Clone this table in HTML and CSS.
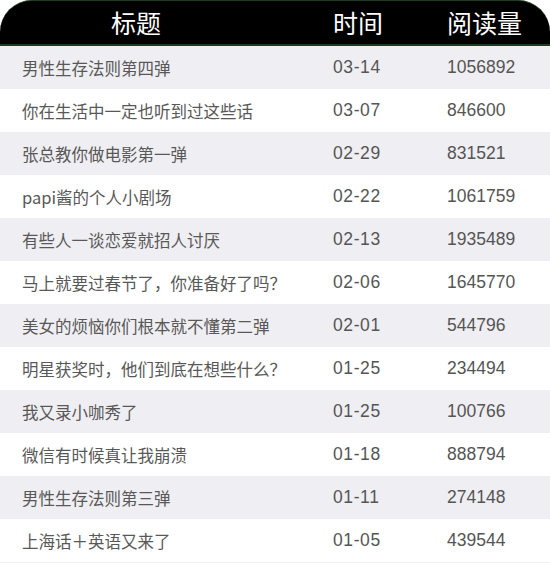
FILE: index.html
```html
<!DOCTYPE html>
<html lang="zh">
<head>
<meta charset="utf-8">
<title>阅读量</title>
<link rel="stylesheet" href="styles.css">
</head>
<body>
<div class="table">
  <div class="head">
    <div class="h-title">标题</div>
    <div class="h-time">时间</div>
    <div class="h-views">阅读量</div>
  </div>
  <div class="row alt"><div class="c-title">男性生存法则第四弹</div><div class="c-time">03-14</div><div class="c-views">1056892</div></div>
  <div class="row"><div class="c-title">你在生活中一定也听到过这些话</div><div class="c-time">03-07</div><div class="c-views">846600</div></div>
  <div class="row alt"><div class="c-title">张总教你做电影第一弹</div><div class="c-time">02-29</div><div class="c-views">831521</div></div>
  <div class="row"><div class="c-title">papi酱的个人小剧场</div><div class="c-time">02-22</div><div class="c-views">1061759</div></div>
  <div class="row alt"><div class="c-title">有些人一谈恋爱就招人讨厌</div><div class="c-time">02-13</div><div class="c-views">1935489</div></div>
  <div class="row"><div class="c-title">马上就要过春节了，你准备好了吗？</div><div class="c-time">02-06</div><div class="c-views">1645770</div></div>
  <div class="row alt"><div class="c-title">美女的烦恼你们根本就不懂第二弹</div><div class="c-time">02-01</div><div class="c-views">544796</div></div>
  <div class="row"><div class="c-title">明星获奖时，他们到底在想些什么？</div><div class="c-time">01-25</div><div class="c-views">234494</div></div>
  <div class="row alt"><div class="c-title">我又录小咖秀了</div><div class="c-time">01-25</div><div class="c-views">100766</div></div>
  <div class="row"><div class="c-title">微信有时候真让我崩溃</div><div class="c-time">01-18</div><div class="c-views">888794</div></div>
  <div class="row alt"><div class="c-title">男性生存法则第三弹</div><div class="c-time">01-11</div><div class="c-views">274148</div></div>
  <div class="row last"><div class="c-title">上海话＋英语又来了</div><div class="c-time">01-05</div><div class="c-views">439544</div></div>
</div>
</body>
</html>
```
FILE: styles.css
```css
html, body {
  margin: 0;
  padding: 0;
  background: #ffffff;
}
.table {
  width: 550px;
  font-family: "Liberation Sans", "Noto Sans CJK SC", sans-serif;
}
.head {
  display: grid;
  grid-template-columns: 333px 114px 1fr;
  align-items: center;
  height: 43px;
  background: #000000;
  border-top: 1px solid #1e3a20;
  border-bottom: 2px solid #1e3a20;
  border-radius: 32px 32px 0 0;
  color: #ffffff;
  font-family: "Noto Sans CJK SC", sans-serif;
  font-size: 25px;
  line-height: 1;
}
.h-title {
  padding-left: 111px;
}
.row {
  display: grid;
  grid-template-columns: 333px 114px 1fr;
  align-items: center;
  height: 43px;
  background: #ffffff;
  color: #555555;
  font-size: 17px;
}
.row.alt {
  background: #efeef2;
}
.row.last {
  border-bottom: 1px solid #f2f2f4;
}
.c-title {
  padding-left: 22px;
  font-family: "Noto Sans CJK SC", sans-serif;
  font-size: 16.5px;
  color: #585858;
}
.c-time {
  font-size: 17.5px;
  letter-spacing: 0.6px;
}
.c-views {
  font-size: 17.5px;
}
```
